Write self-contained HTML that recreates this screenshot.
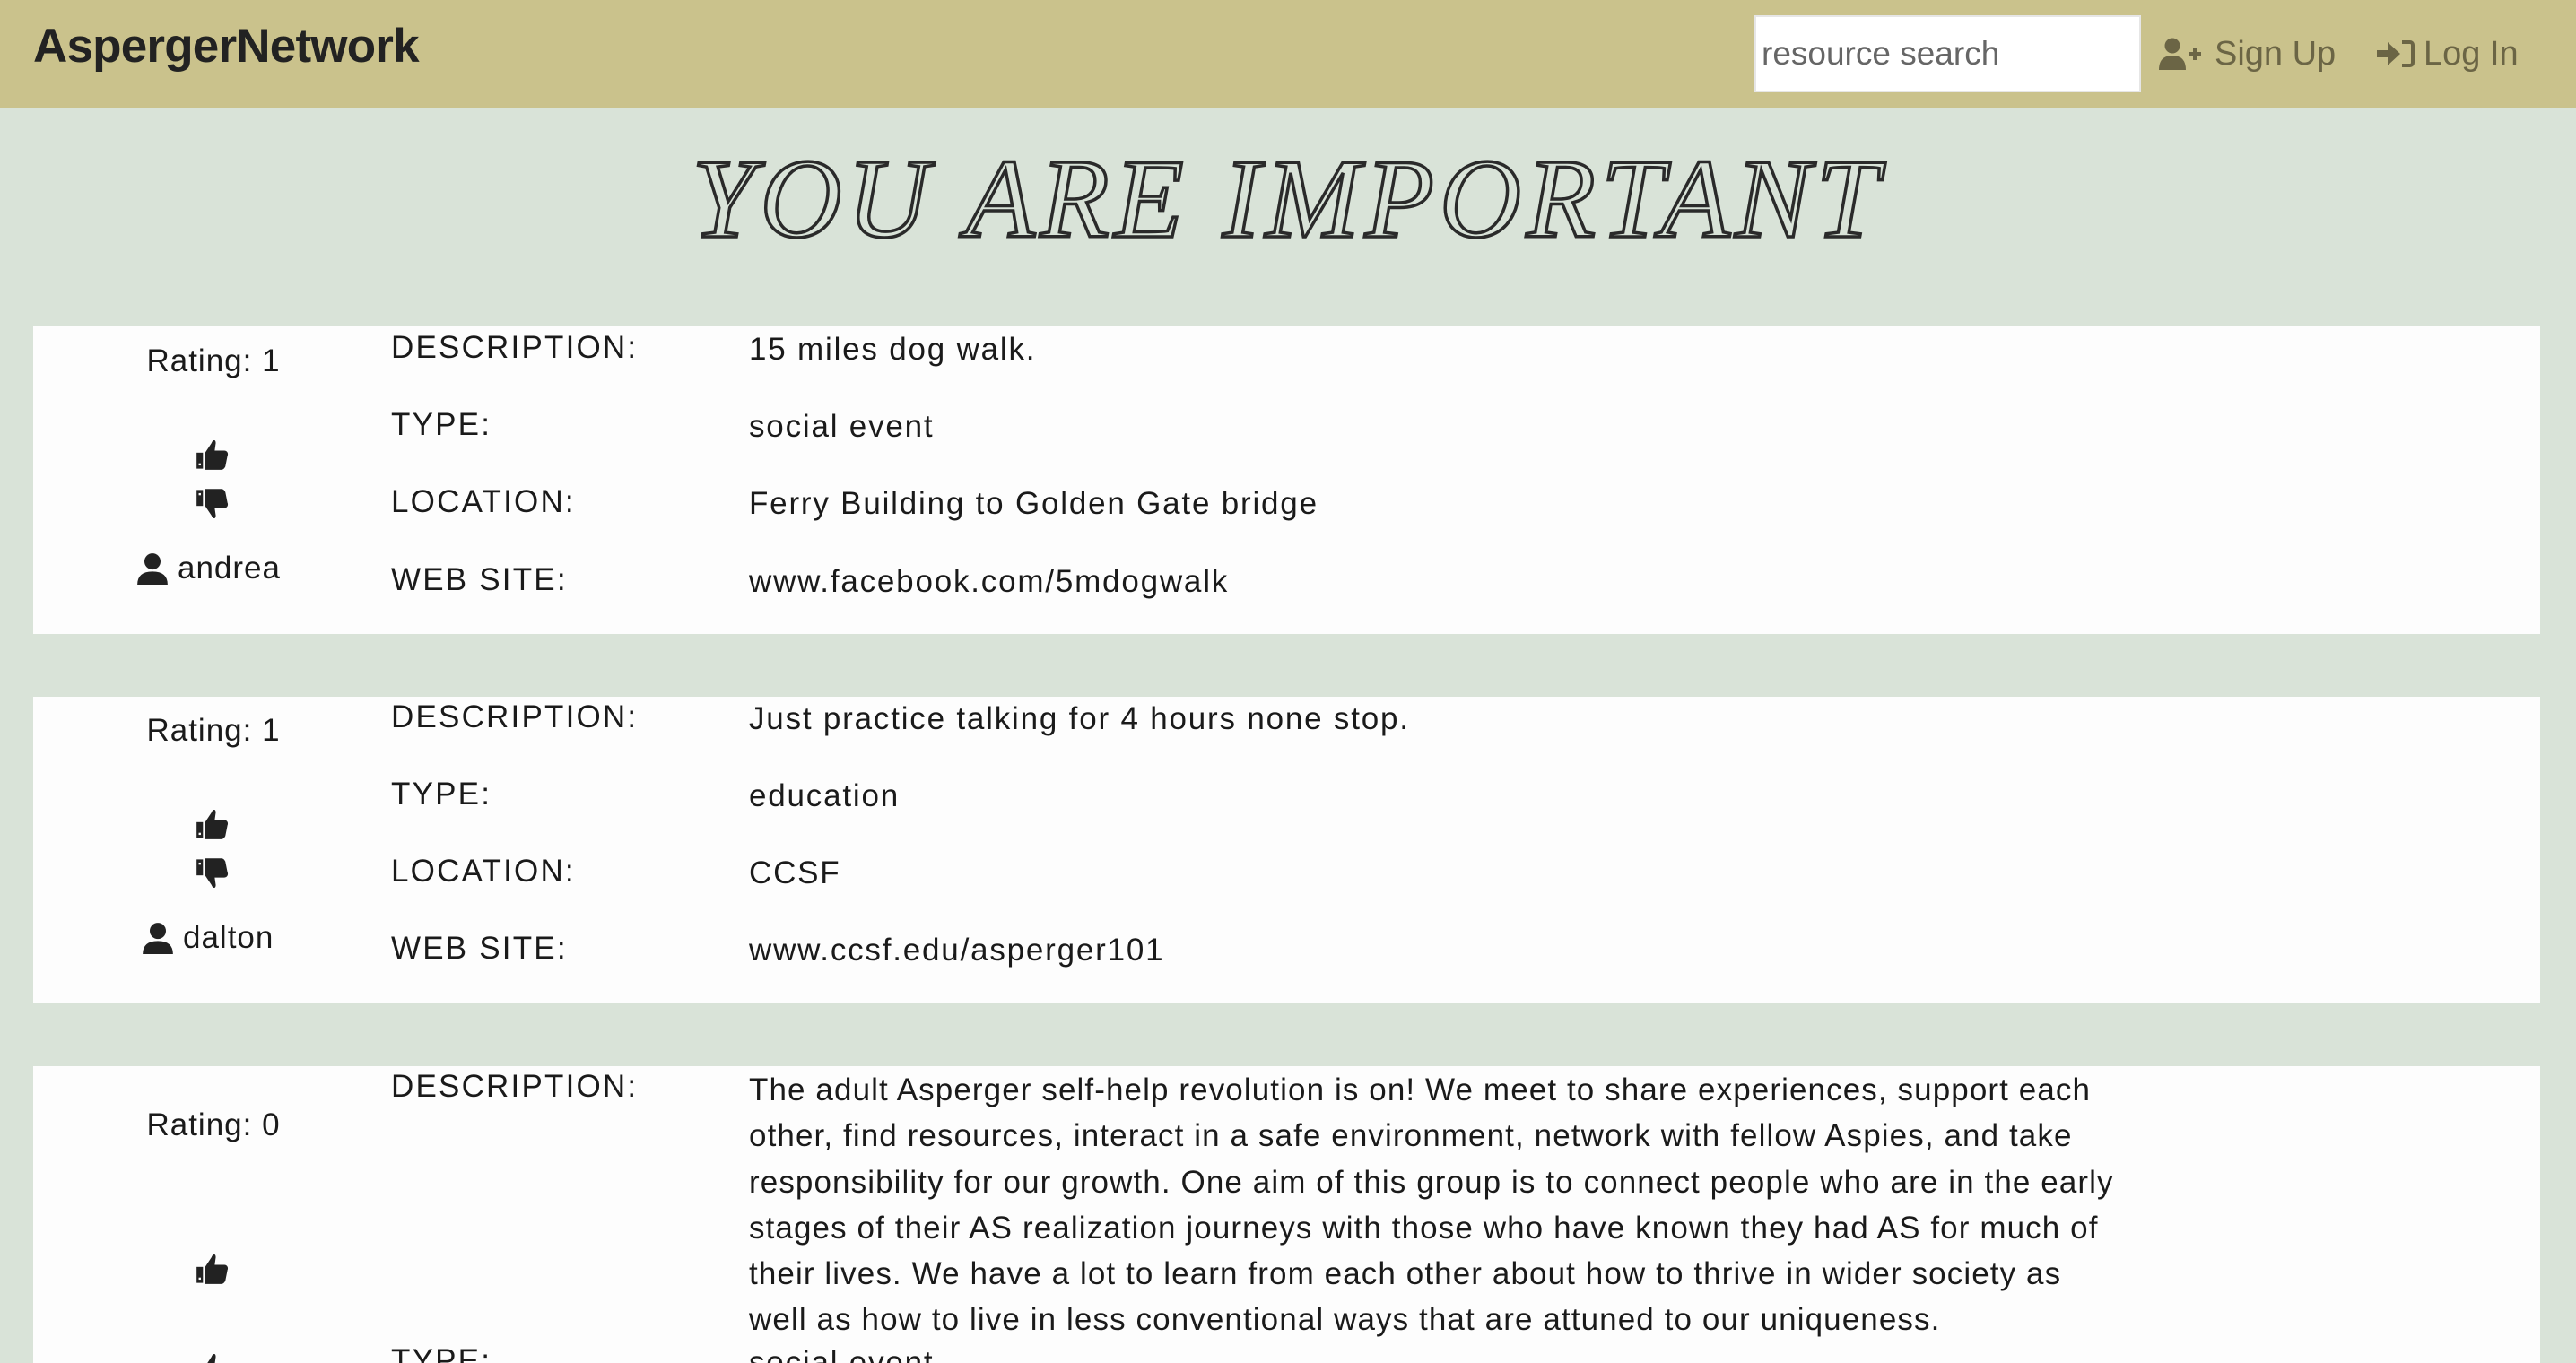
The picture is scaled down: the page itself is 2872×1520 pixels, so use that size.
<!DOCTYPE html>
<html><head><meta charset="utf-8">
<style>
*{margin:0;padding:0;box-sizing:border-box}
html,body{width:2872px;height:1520px;overflow:hidden;background:#d9e3d8;font-family:"Liberation Sans",sans-serif;color:#1a1a1a;position:relative}
.a{position:absolute;white-space:nowrap}
.nav{position:absolute;left:0;top:0;width:2872px;height:120px;background:#cac28c}
.brand{left:37px;top:22px;font-size:53px;line-height:60px;color:#222;font-weight:bold;letter-spacing:-0.8px}
.search{left:1956px;top:17px;width:431px;height:86px;background:#fff;border:2px solid #e6e6e6;font-size:37px;color:#666;line-height:82px;padding-left:6px}
.nl{font-size:38px;color:#6b6545;line-height:44px;top:38px}
.title{left:0;width:2872px;text-align:center;top:158px;font-family:"Liberation Serif",serif;font-style:italic;font-size:126px;line-height:130px;color:transparent;-webkit-text-stroke:3.5px #2a2a2a;letter-spacing:6px}
.card{position:absolute;left:37px;width:2795px;background:#fdfdfd}
.t{font-size:35px;line-height:44px}
.lbl{left:436px;letter-spacing:2.2px}
.val{left:835px;letter-spacing:1.8px}
.ctr{width:200px;text-align:center;left:138px;letter-spacing:1px}
</style></head><body>
<div class="nav"></div>
<div class="a brand">AspergerNetwork</div>
<div class="a search">resource search</div>
<svg class="a" style="left:2406px;top:42px" width="52" height="36" viewBox="0 0 52 36"><circle cx="16" cy="9" r="8.5" fill="#6b6545"/><path d="M1 36 Q1 20 16 20 Q31 20 31 36 Z" fill="#6b6545"/><path d="M34 18h14M41 11v14" stroke="#6b6545" stroke-width="4"/></svg>
<div class="a nl" style="left:2469px">Sign Up</div>
<svg class="a" style="left:2650px;top:44px" width="42" height="32" viewBox="0 0 42 32"><path d="M0 12h12v-9l14 13-14 13v-9H0z" fill="#6b6545"/><path d="M28 3h9a3 3 0 0 1 3 3v20a3 3 0 0 1-3 3h-9" fill="none" stroke="#6b6545" stroke-width="4"/></svg>
<div class="a nl" style="left:2702px">Log In</div>

<div class="a title">YOU ARE IMPORTANT</div>

<div class="card" style="top:364px;height:343px"></div>
<div class="card" style="top:777px;height:342px"></div>
<div class="card" style="top:1189px;height:331px"></div>

<!-- card 1 -->
<div class="a t ctr" style="top:381px">Rating: 1</div>
<svg class="a" style="left:218px;top:487px" width="38" height="38" viewBox="0 0 32 32"><rect x="1" y="15" width="6" height="15" fill="#222"/><rect x="3" y="25" width="2" height="2" fill="#fff"/><path d="M9 15l6-9c1-3 4-4 4 0l-1 7h9c3 0 4 3 3 5l-2 10c-1 2-2 3-4 3H9z" fill="#222"/></svg>
<svg class="a" style="left:218px;top:544px" width="38" height="38" viewBox="0 0 32 32"><rect x="1" y="2" width="6" height="15" fill="#222"/><rect x="3" y="5" width="2" height="2" fill="#fff"/><path d="M9 17l6 9c1 3 4 4 4 0l-1-7h9c3 0 4-3 3-5L28 4c-1-2-2-3-4-3H9z" fill="#222"/></svg>
<svg class="a" style="left:152px;top:616px" width="36" height="36" viewBox="0 0 32 32"><circle cx="16" cy="9" r="8" fill="#222"/><path d="M1 32Q1 19 16 19Q31 19 31 32Z" fill="#222"/></svg>
<div class="a t" style="left:198px;top:612px;letter-spacing:1px">andrea</div>
<div class="a t lbl" style="top:366px">DESCRIPTION:</div>
<div class="a t lbl" style="top:452px">TYPE:</div>
<div class="a t lbl" style="top:538px">LOCATION:</div>
<div class="a t lbl" style="top:625px">WEB SITE:</div>
<div class="a t val" style="top:368px">15 miles dog walk.</div>
<div class="a t val" style="top:454px">social event</div>
<div class="a t val" style="top:540px">Ferry Building to Golden Gate bridge</div>
<div class="a t val" style="top:627px">www.facebook.com/5mdogwalk</div>

<!-- card 2 -->
<div class="a t ctr" style="top:793px">Rating: 1</div>
<svg class="a" style="left:218px;top:899px" width="38" height="38" viewBox="0 0 32 32"><rect x="1" y="15" width="6" height="15" fill="#222"/><rect x="3" y="25" width="2" height="2" fill="#fff"/><path d="M9 15l6-9c1-3 4-4 4 0l-1 7h9c3 0 4 3 3 5l-2 10c-1 2-2 3-4 3H9z" fill="#222"/></svg>
<svg class="a" style="left:218px;top:956px" width="38" height="38" viewBox="0 0 32 32"><rect x="1" y="2" width="6" height="15" fill="#222"/><rect x="3" y="5" width="2" height="2" fill="#fff"/><path d="M9 17l6 9c1 3 4 4 4 0l-1-7h9c3 0 4-3 3-5L28 4c-1-2-2-3-4-3H9z" fill="#222"/></svg>
<svg class="a" style="left:158px;top:1028px" width="36" height="36" viewBox="0 0 32 32"><circle cx="16" cy="9" r="8" fill="#222"/><path d="M1 32Q1 19 16 19Q31 19 31 32Z" fill="#222"/></svg>
<div class="a t" style="left:204px;top:1024px;letter-spacing:1px">dalton</div>
<div class="a t lbl" style="top:778px">DESCRIPTION:</div>
<div class="a t lbl" style="top:864px">TYPE:</div>
<div class="a t lbl" style="top:950px">LOCATION:</div>
<div class="a t lbl" style="top:1036px">WEB SITE:</div>
<div class="a t val" style="top:780px">Just practice talking for 4 hours none stop.</div>
<div class="a t val" style="top:866px">education</div>
<div class="a t val" style="top:952px">CCSF</div>
<div class="a t val" style="top:1038px">www.ccsf.edu/asperger101</div>

<!-- card 3 -->
<div class="a t ctr" style="top:1233px">Rating: 0</div>
<svg class="a" style="left:218px;top:1395px" width="38" height="38" viewBox="0 0 32 32"><rect x="1" y="15" width="6" height="15" fill="#222"/><rect x="3" y="25" width="2" height="2" fill="#fff"/><path d="M9 15l6-9c1-3 4-4 4 0l-1 7h9c3 0 4 3 3 5l-2 10c-1 2-2 3-4 3H9z" fill="#222"/></svg>
<svg class="a" style="left:218px;top:1506px" width="38" height="38" viewBox="0 0 32 32"><rect x="1" y="15" width="6" height="15" fill="#222"/><path d="M9 15l6-9c1-3 4-4 4 0l-1 7h9c3 0 4 3 3 5l-2 10c-1 2-2 3-4 3H9z" fill="#222"/></svg>
<div class="a t lbl" style="top:1190px">DESCRIPTION:</div>
<div class="a t lbl" style="top:1496px">TYPE:</div>
<div class="a t val" style="top:1190px;line-height:51.3px;letter-spacing:1.1px">The adult Asperger self-help revolution is on! We meet to share experiences, support each<br>other, find resources, interact in a safe environment, network with fellow Aspies, and take<br>responsibility for our growth. One aim of this group is to connect people who are in the early<br>stages of their AS realization journeys with those who have known they had AS for much of<br>their lives. We have a lot to learn from each other about how to thrive in wider society as<br>well as how to live in less conventional ways that are attuned to our uniqueness.</div>
<div class="a t val" style="top:1498px">social event</div>
</body></html>
